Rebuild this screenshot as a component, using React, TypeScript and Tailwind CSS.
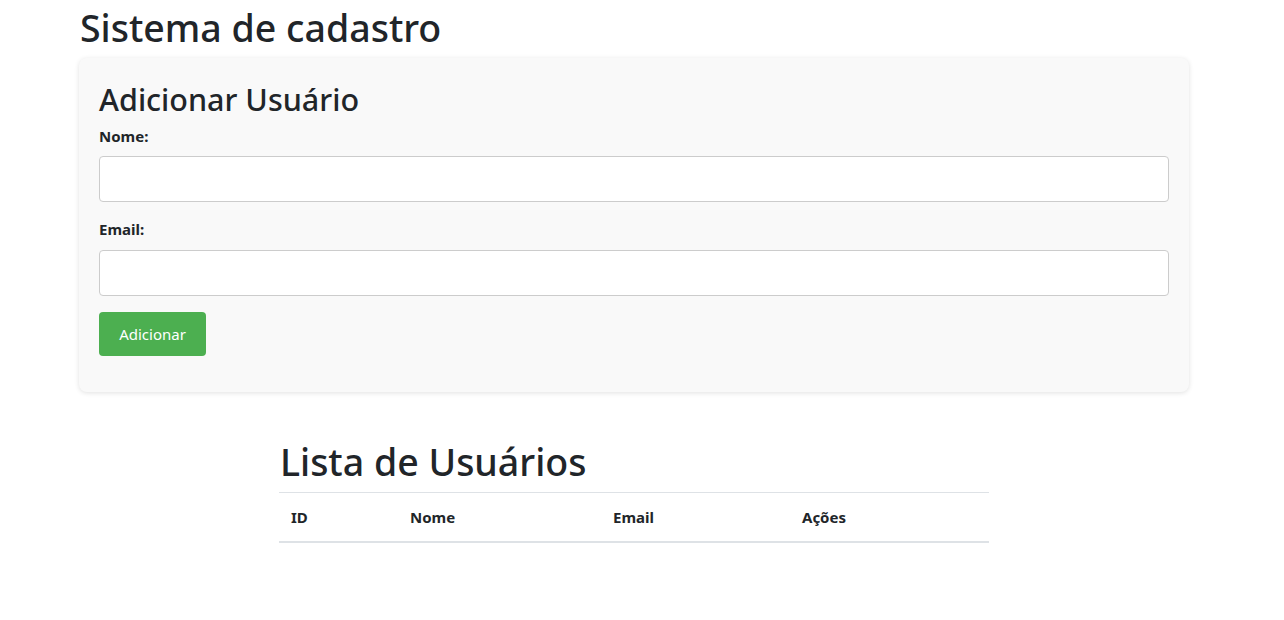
export default function App() {
  return (
    <div className="min-h-screen bg-white text-[#212529] font-['Noto_Sans',sans-serif]">
      <div className="ml-[79px] w-[1110px]">
        <h1 className="pl-px text-[37.5px] font-medium leading-[56px] h-[58px]">Sistema de cadastro</h1>

        <div className="rounded-lg bg-[#f9f9f9] px-5 pt-[20px] pb-[36px] shadow-[0_1px_5px_rgba(0,0,0,0.12)]">
          <h2 className="text-[30.5px] font-medium leading-[42px] mb-[5px]">Adicionar Usuário</h2>

          <label className="block text-[15px] font-bold leading-[22px] mb-[9px]">Nome:</label>
          <input
            type="text"
            className="block h-[46px] w-full rounded border border-[#cccccc] bg-white px-3 outline-none"
          />

          <label className="mt-[16px] block text-[15px] font-bold leading-[22px] mb-[10px]">Email:</label>
          <input
            type="email"
            className="block h-[46px] w-full rounded border border-[#cccccc] bg-white px-3 outline-none"
          />

          <button className="mt-4 h-[44px] w-[107px] rounded bg-[#4caf50] text-[15px] text-white">
            Adicionar
          </button>
        </div>

        <div className="mx-auto mt-[42px] w-[710px]">
          <h1 className="pl-px text-[37.5px] font-medium leading-[56px] mb-[2px]">Lista de Usuários</h1>
          <table className="w-full border-collapse text-left">
            <thead>
              <tr className="border-t border-[#dee2e6] border-b-2">
                <th className="w-[119px] px-3 h-[49px] text-[15px] font-bold">ID</th>
                <th className="w-[203px] px-3 text-[15px] font-bold">Nome</th>
                <th className="w-[189px] px-3 text-[15px] font-bold">Email</th>
                <th className="px-3 text-[15px] font-bold">Ações</th>
              </tr>
            </thead>
            <tbody></tbody>
          </table>
        </div>
      </div>
    </div>
  )
}
